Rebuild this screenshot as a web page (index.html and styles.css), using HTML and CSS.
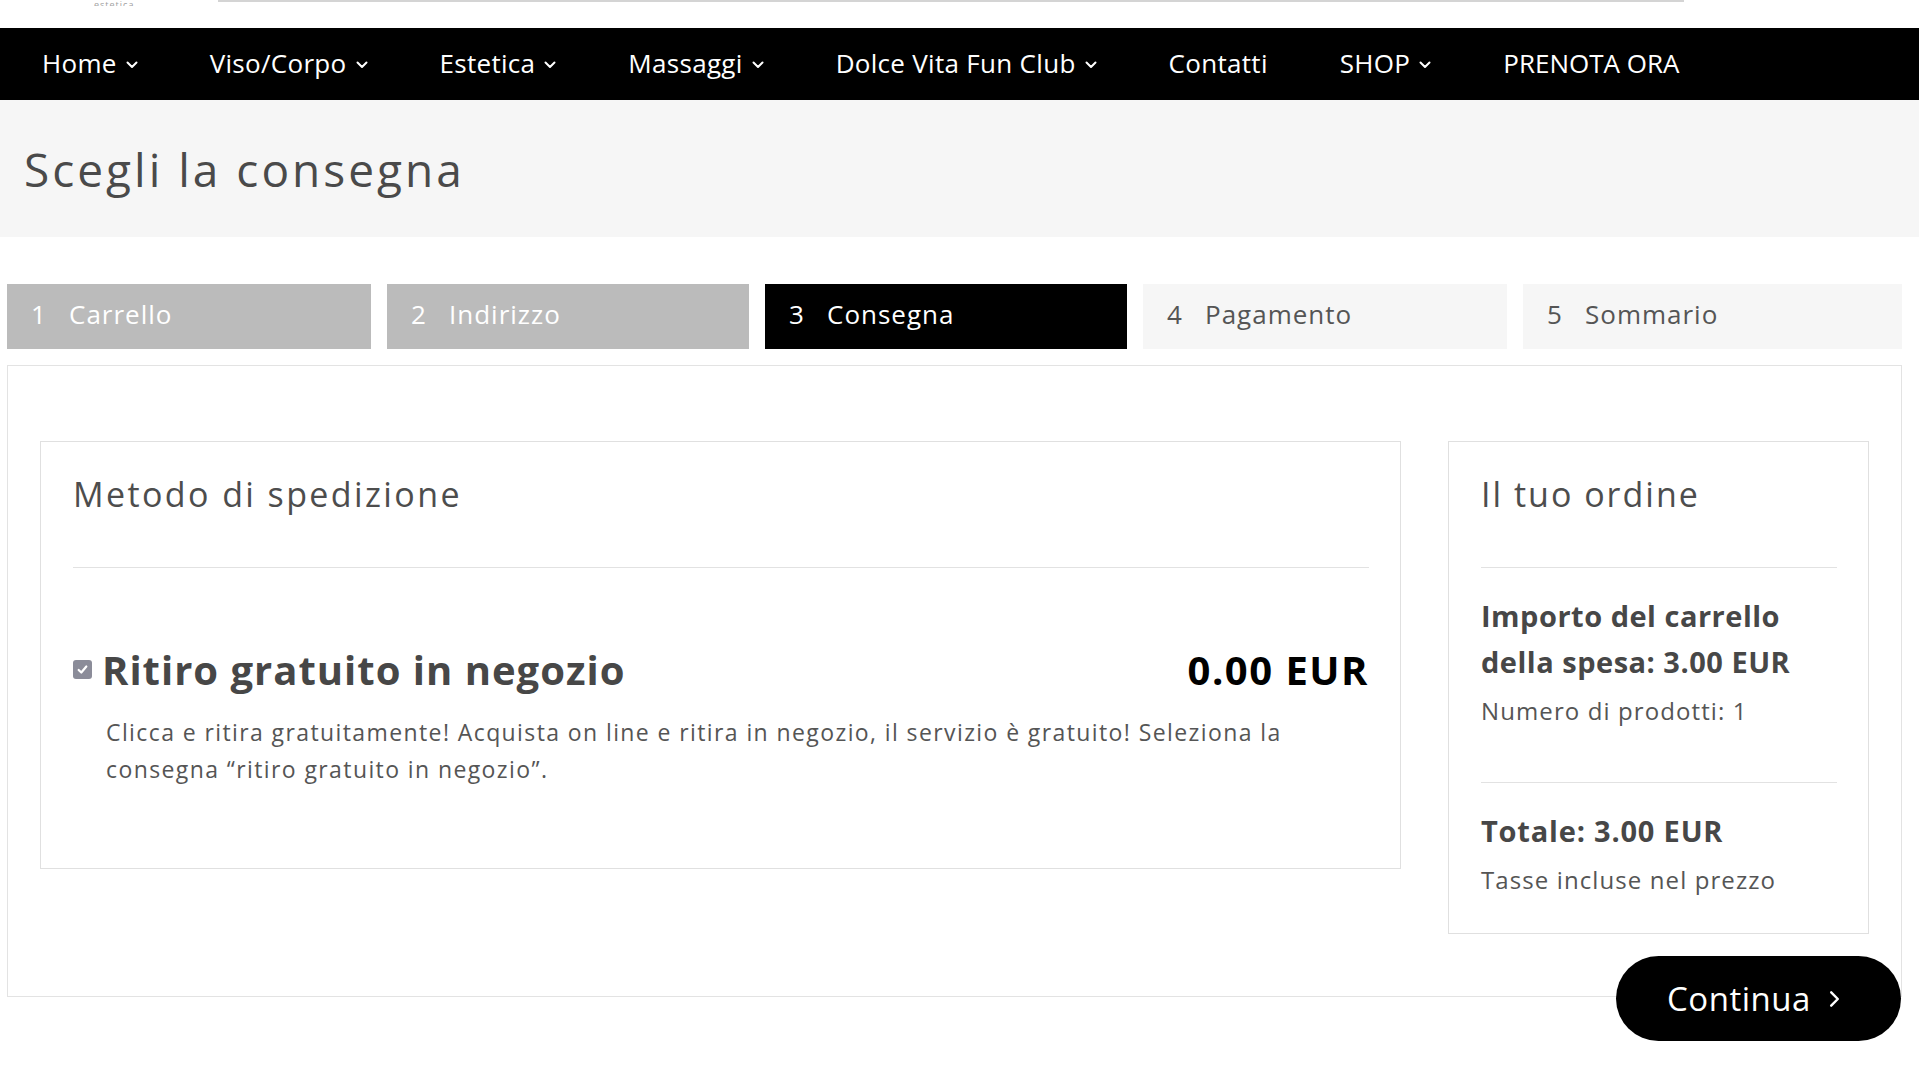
FILE: index.html
```html
<!DOCTYPE html>
<html lang="it">
<head>
<meta charset="utf-8">
<title>Scegli la consegna</title>
<link rel="stylesheet" href="styles.css">
</head>
<body>
<header class="topbar">
  <div class="logo-text">estetica</div>
  <div class="topline"></div>
</header>

<nav class="mainnav">
  <ul class="menu">
    <li class="menu-item">Home <svg class="caret" viewBox="0 0 12 8"><polyline points="1.5,1.5 6,6 10.5,1.5"/></svg></li>
    <li class="menu-item">Viso/Corpo <svg class="caret" viewBox="0 0 12 8"><polyline points="1.5,1.5 6,6 10.5,1.5"/></svg></li>
    <li class="menu-item">Estetica <svg class="caret" viewBox="0 0 12 8"><polyline points="1.5,1.5 6,6 10.5,1.5"/></svg></li>
    <li class="menu-item">Massaggi <svg class="caret" viewBox="0 0 12 8"><polyline points="1.5,1.5 6,6 10.5,1.5"/></svg></li>
    <li class="menu-item">Dolce Vita Fun Club <svg class="caret" viewBox="0 0 12 8"><polyline points="1.5,1.5 6,6 10.5,1.5"/></svg></li>
    <li class="menu-item">Contatti</li>
    <li class="menu-item">SHOP <svg class="caret" viewBox="0 0 12 8"><polyline points="1.5,1.5 6,6 10.5,1.5"/></svg></li>
    <li class="menu-item">PRENOTA ORA</li>
  </ul>
</nav>

<section class="page-title">
  <h1>Scegli la consegna</h1>
</section>

<main class="checkout">
  <ol class="steps">
    <li class="step done"><span class="num">1</span><span class="label">Carrello</span></li>
    <li class="step done"><span class="num">2</span><span class="label">Indirizzo</span></li>
    <li class="step current"><span class="num">3</span><span class="label">Consegna</span></li>
    <li class="step todo"><span class="num">4</span><span class="label">Pagamento</span></li>
    <li class="step todo last"><span class="num">5</span><span class="label">Sommario</span></li>
  </ol>

  <div class="panel">
    <section class="box shipping">
      <h2 class="box-title">Metodo di spedizione</h2>
      <hr class="sep">
      <div class="method">
        <div class="method-head">
          <span class="check"><svg viewBox="0 0 20 20"><polyline points="5.5,10.5 8.6,13.5 14.5,6.5"/></svg></span>
          <span class="method-name">Ritiro gratuito in negozio</span>
          <span class="method-price">0.00 EUR</span>
        </div>
        <p class="method-desc">Clicca e ritira gratuitamente! Acquista on line e ritira in negozio, il servizio è gratuito! Seleziona la<br>consegna “ritiro gratuito in negozio”.</p>
      </div>
    </section>

    <aside class="box summary">
      <h2 class="box-title">Il tuo ordine</h2>
      <hr class="sep">
      <p class="sum-strong first">Importo del carrello<br>della spesa: 3.00 EUR</p>
      <p class="sum-note">Numero di prodotti: 1</p>
      <hr class="sep sep-mid">
      <p class="sum-strong">Totale: 3.00 EUR</p>
      <p class="sum-note">Tasse incluse nel prezzo</p>
    </aside>
  </div>

  <div class="actions">
    <button class="btn-continue">Continua <svg class="chev" viewBox="0 0 10 16"><polyline points="2,2 8,8 2,14"/></svg></button>
  </div>
</main>
</body>
</html>
```

FILE: styles.css
```css
* { box-sizing: border-box; }

html, body {
  margin: 0;
  padding: 0;
  background: #ffffff;
  font-family: "Open Sans", "Liberation Sans", Arial, sans-serif;
  color: #555555;
}

/* top strip */
.topbar {
  height: 28px;
  display: flex;
  align-items: flex-start;
}
.logo-text {
  width: 218px;
  padding-left: 94px;
  font-size: 9px;
  line-height: 9px;
  height: 6px;
  overflow: hidden;
  color: #a0a0a0;
  letter-spacing: 1px;
}
.topline {
  width: 1466px;
  height: 2px;
  background: #d4d4d4;
}

/* navigation */
.mainnav {
  background: #000000;
  height: 72px;
}
.menu {
  list-style: none;
  margin: 0;
  padding: 0 0 0 6px;
  height: 100%;
  display: flex;
  align-items: center;
}
.menu-item {
  color: #ffffff;
  font-size: 26px;
  font-weight: 400;
  letter-spacing: 0.3px;
  padding: 0 36px 2px 36px;
  display: flex;
  align-items: center;
  gap: 9px;
  white-space: nowrap;
}
.menu-item:last-child { letter-spacing: 0; }
.caret {
  width: 12px;
  height: 8px;
  margin-top: 3px;
  fill: none;
  stroke: #ffffff;
  stroke-width: 2;
  stroke-linecap: round;
  stroke-linejoin: round;
}

/* page title */
.page-title {
  background: #f6f6f6;
  height: 137px;
  display: flex;
  align-items: center;
  padding-left: 24px;
}
.page-title h1 {
  margin: 0;
  font-size: 46px;
  font-weight: 400;
  letter-spacing: 3px;
  color: #4a4a4a;
  line-height: 1;
}

/* checkout */
.checkout {
  padding: 47px 17px 40px 7px;
}

.steps {
  list-style: none;
  margin: 0;
  padding: 0;
  display: grid;
  grid-template-columns: 364px 362px 362px 364px 1fr;
  column-gap: 16px;
  height: 65px;
}
.step {
  display: flex;
  align-items: center;
  padding: 0 0 5px 24px;
  font-size: 26px;
  letter-spacing: 1px;
}
.step .num {
  width: 38px;
}
.step.done { background: #bbbbbb; color: #ffffff; }
.step.current { background: #000000; color: #ffffff; }
.step.todo { background: #f6f6f6; color: #555555; }

.panel {
  margin-top: 16px;
  border: 1px solid #e3e3e3;
  padding: 75px 32px 62px 32px;
  display: grid;
  grid-template-columns: 1fr 421px;
  column-gap: 47px;
  align-items: start;
}

.box {
  border: 1px solid #e0e0e0;
  padding: 0 31px 0 32px;
}
.box-title {
  margin: 0;
  padding-top: 32px;
  font-size: 34px;
  line-height: 40px;
  font-weight: 400;
  letter-spacing: 2.4px;
  color: #4d4d4d;
}
.summary .box-title { letter-spacing: 2px; }
.sep {
  border: 0;
  height: 1px;
  background: #e2e2e2;
  margin: 53px 0 0 0;
}

.method {
  padding: 76px 0 80px 0;
}
.method-head {
  display: flex;
  align-items: center;
  height: 50px;
}
.check {
  width: 19px;
  height: 19px;
  border-radius: 3px;
  background: #8b8c99;
  display: flex;
  align-items: center;
  justify-content: center;
  margin-right: 10px;
}
.check svg {
  width: 17px;
  height: 17px;
  fill: none;
  stroke: #ffffff;
  stroke-width: 2.6;
  stroke-linecap: round;
  stroke-linejoin: round;
}
.method-name {
  font-size: 40px;
  font-weight: 700;
  color: #474747;
  letter-spacing: 1px;
}
.method-price {
  margin-left: auto;
  font-size: 40px;
  font-weight: 700;
  color: #000000;
  letter-spacing: 1.5px;
}
.method-desc {
  margin: 20px 0 0 0;
  padding-left: 33px;
  font-size: 23px;
  line-height: 37px;
  letter-spacing: 1.4px;
  color: #555555;
}

.summary {
  padding-bottom: 36px;
}
.sum-strong {
  margin: 9px 0 0 0;
  font-size: 29px;
  line-height: 46px;
  font-weight: 700;
  letter-spacing: 0.8px;
  color: #474747;
}
.sum-strong.first { margin-top: 25px; letter-spacing: 0.5px; }
.sep + .sum-strong { margin-top: 25px; }
.sum-note {
  margin: 9px 0 0 0;
  font-size: 24px;
  line-height: 34px;
  letter-spacing: 1.1px;
  color: #555555;
}
.sep-mid { margin-top: 54px; }

.actions {
  display: flex;
  justify-content: flex-end;
  margin-top: -41px;
  padding-right: 1px;
}
.btn-continue {
  width: 285px;
  height: 85px;
  border: 0;
  border-radius: 43px;
  background: #000000;
  color: #ffffff;
  font-family: inherit;
  font-size: 33px;
  letter-spacing: 0.5px;
  display: flex;
  align-items: center;
  padding-left: 51px;
  gap: 18px;
  cursor: pointer;
}
.chev {
  width: 11px;
  height: 18px;
  fill: none;
  stroke: #ffffff;
  stroke-width: 2.2;
  stroke-linecap: round;
  stroke-linejoin: round;
}
```
